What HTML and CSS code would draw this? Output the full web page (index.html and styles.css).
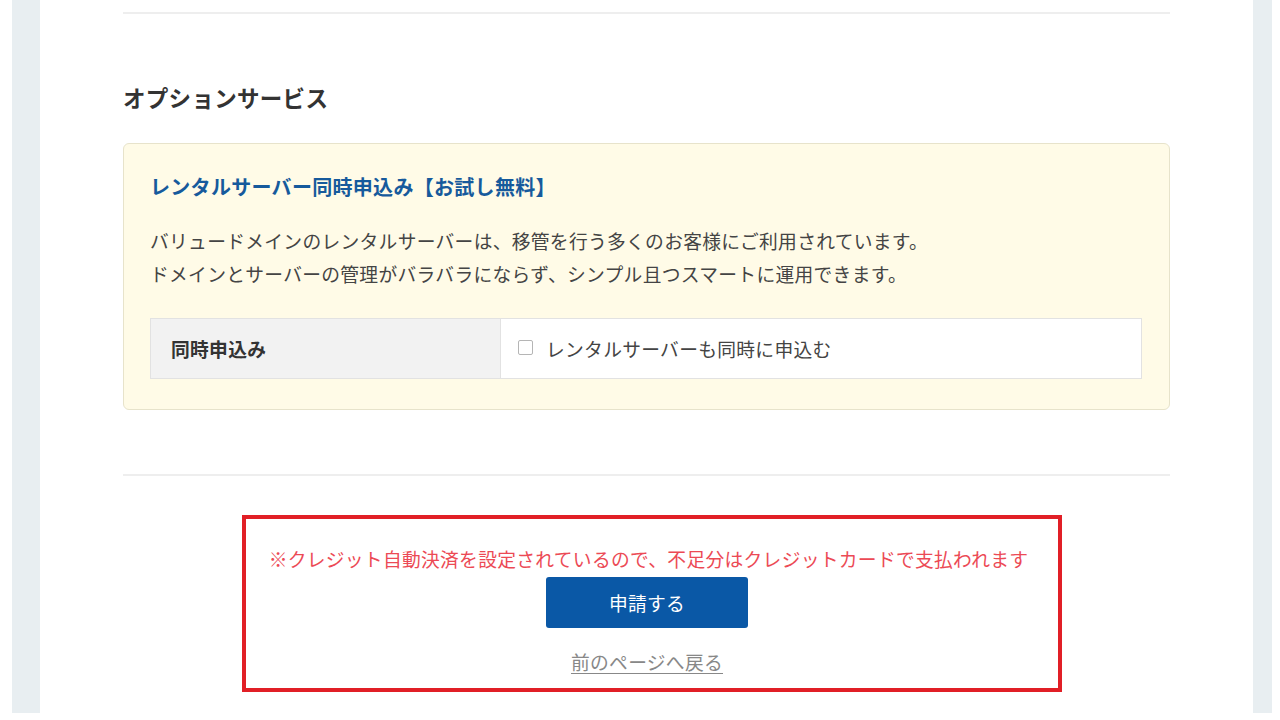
FILE: index.html
```html
<!DOCTYPE html>
<html lang="ja">
  <head>
    <meta charset="UTF-8" />
    <meta name="viewport" content="width=device-width, initial-scale=1.0" />
    <title>オプションサービス</title>
    <link rel="stylesheet" href="styles.css">
  </head>
  <body>
    <div class="frame">
      <div class="backdrop">
        <div class="panel">
          <div class="divider"></div>

          <h2 class="section-title">オプションサービス</h2>

          <div class="option-box">
            <h3 class="option-title">レンタルサーバー同時申込み【お試し無料】</h3>
            <p class="option-text">
              バリュードメインのレンタルサーバーは、移管を行う多くのお客様にご利用されています。<br />
              ドメインとサーバーの管理がバラバラにならず、シンプル且つスマートに運用できます。
            </p>

            <table class="option-table">
              <tr>
                <th>同時申込み</th>
                <td>
                  <label class="check">
                    <input type="checkbox" />
                    <span>レンタルサーバーも同時に申込む</span>
                  </label>
                </td>
              </tr>
            </table>
          </div>

          <div class="divider lower"></div>

          <div class="submit-area">
            <p class="notice">※クレジット自動決済を設定されているので、不足分はクレジットカードで支払われます</p>
            <button class="submit-btn">申請する</button>
            <a class="back-link" href="#">前のページへ戻る</a>
            <div class="highlight"></div>
          </div>
        </div>
      </div>
    </div>
  </body>
</html>
```

FILE: styles.css
```css
*,
*::before,
*::after {
  box-sizing: border-box;
  margin: 0;
  padding: 0;
}

body {
  background-color: #fff;
  font-family: "Noto Sans CJK JP", "Noto Sans", sans-serif;
  color: #444;
  letter-spacing: 0.3px;
  width: 1280px;
  height: 720px;
  overflow: hidden;
}

.frame {
  padding: 0 8px 7px 12px;
  height: 100%;
}

.backdrop {
  background-color: #e8eef1;
  padding: 0 19px 0 28px;
  height: 100%;
}

.panel {
  background-color: #fff;
  height: 100%;
  padding: 12px 83px 0 83px;
}

.divider {
  height: 2px;
  background-color: #eeeeee;
}

.divider.lower {
  margin-top: 64px;
}

.section-title {
  margin-top: 68px;
  font-size: 22.5px;
  line-height: 30px;
  font-weight: bold;
  color: #333;
}

.option-box {
  margin-top: 31px;
  background-color: #fffbe7;
  border: 1px solid #e7e3cb;
  border-radius: 6px;
  padding: 28px 27px 30px 26px;
}

.option-title {
  font-size: 20px;
  line-height: 30px;
  font-weight: bold;
  color: #165a9c;
}

.option-text {
  margin-top: 22px;
  font-size: 18.75px;
  line-height: 33px;
  color: #444;
}

.option-table {
  margin-top: 28px;
  width: 100%;
  border-collapse: collapse;
  height: 61px;
}

.option-table th,
.option-table td {
  border: 1px solid #e2e2e2;
  font-size: 18.75px;
  text-align: left;
  vertical-align: middle;
}

.option-table th {
  width: 350px;
  background-color: #f2f2f2;
  padding-left: 20px;
  font-weight: bold;
  color: #333;
}

.option-table td {
  background-color: #fff;
  padding-left: 17px;
}

.check {
  display: flex;
  align-items: center;
  gap: 13px;
  color: #444;
}

.check input {
  appearance: none;
  width: 15px;
  height: 15px;
  border: 1px solid #b5b5b5;
  border-radius: 2px;
  background-color: #fff;
  margin-top: -2px;
}

.submit-area {
  position: relative;
  padding-top: 70px;
  display: flex;
  flex-direction: column;
  align-items: center;
}

.notice {
  font-size: 18.75px;
  line-height: 26px;
  color: #ec4a55;
  margin-left: 4px;
}

.submit-btn {
  margin-top: 5px;
  width: 202px;
  height: 51px;
  background-color: #0a58a6;
  border: none;
  border-radius: 3px;
  color: #fff;
  font-family: inherit;
  font-size: 18.75px;
  letter-spacing: inherit;
  margin-left: 1px;
}

.back-link {
  margin-top: 21px;
  font-size: 18.75px;
  line-height: 26px;
  color: #888;
  text-decoration: underline;
  text-underline-offset: 3px;
  margin-left: 1px;
}

.highlight {
  position: absolute;
  top: 39px;
  left: 119px;
  width: 820px;
  height: 177px;
  border: 4px solid #e11f26;
  pointer-events: none;
}
```
